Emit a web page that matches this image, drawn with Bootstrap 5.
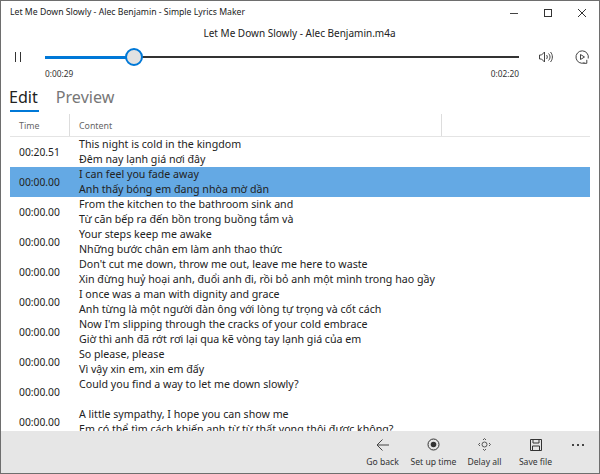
<!DOCTYPE html>
<html lang="en">
<head>
  <meta charset="UTF-8" />
  <title>Let Me Down Slowly - Alec Benjamin - Simple Lyrics Maker</title>
  <link href="https://cdn.jsdelivr.net/npm/bootstrap@5.3.3/dist/css/bootstrap.min.css" rel="stylesheet">
  <style>
    html, body { height: 100%; overflow: hidden; }
    body { font-family: "Noto Sans", "Open Sans", sans-serif; color: #222; background: #fff; }
    .app-window { height: 474px; border: 1px solid #6e6e6e; }
    .title-bar { height: 24px; padding-left: 9px; font-size: 8.7px; color: #222; }
    .win-btn { width: 34px; height: 24px; }
    .file-name { height: 17px; font-size: 10px; line-height: 17px; padding-right: 1px; }
    .player-row { height: 30px; }
    .pause-btn { width: 44px; padding-left: 14px; }
    .seek { flex: 1; height: 2px; background: #333; position: relative; }
    .seek-done { width: 89px; height: 3px; margin-top: -.5px; background: #0078d7; }
    .seek-thumb { position: absolute; left: 80px; top: -8px; width: 18px; height: 18px; border-radius: 50%; background: #e2e2e2; border: 2px solid #0078d7; }
    .player-end { width: 80px; padding-left: 20px; gap: 22px; }
    .time-row { height: 14px; margin-top: -5px; padding: 0 80px 0 44px; font-size: 8.3px; line-height: 14px; color: #333; }
    .pivot { height: 33px; padding: 1px 0 0 8px; gap: 18px; font-size: 16.1px; line-height: 30px; }
    .pivot-on { position: relative; height: 30px; color: #222; }
    .pivot-on::after { content: ""; position: absolute; left: 1px; right: -1px; bottom: 0; height: 2px; background: #0078d7; }
    .pivot-off { color: #777; }
    .lyric-head { height: 23px; margin: 0 9px; font-size: 8.8px; color: #666; border-bottom: 1px solid #e4e4e4; }
    .head-time { width: 60px; padding: 6px 0 0 9px; border-right: 1px solid #ddd; }
    .head-text { width: 372px; padding: 6px 0 0 9px; border-right: 1px solid #ddd; }
    .lyric-list { flex: 1; min-height: 0; overflow: hidden; }
    .lyric-row { height: 30px; margin: 0 9px; flex-shrink: 0; }
    .lyric-row.picked { background: #64a9e4; }
    .lyric-time { width: 60px; padding-left: 9px; font-size: 10.3px; line-height: 30px; }
    .lyric-text { padding-left: 9px; font-size: 10.65px; line-height: 15px; white-space: nowrap; }
    .cmd-bar { height: 42px; background: #e6e6e6; padding-right: 5px; font-size: 8.6px; color: #333; }
    .cmd-btn { width: 51px; padding-top: 2px; }
    .cmd-ico { height: 23px; }
    .cmd-more { width: 33px; height: 27px; gap: 3px; }
    .cmd-dot { width: 2px; height: 2px; background: #444; }
  </style>
</head>
<body>
  <div class="app-window d-flex flex-column">
    <div class="title-bar d-flex align-items-center justify-content-between">
      <span>Let Me Down Slowly - Alec Benjamin - Simple Lyrics Maker</span>
      <div class="d-flex">
        <div class="win-btn d-flex align-items-center justify-content-center"><svg width="10" height="10" viewBox="0 0 10 10"><path d="M1 5.5h8" stroke="#444" fill="none"/></svg></div>
        <div class="win-btn d-flex align-items-center justify-content-center"><svg width="10" height="10" viewBox="0 0 10 10"><rect x="1.5" y="1.5" width="7" height="7" stroke="#333" fill="none"/></svg></div>
        <div class="win-btn d-flex align-items-center justify-content-center"><svg width="10" height="10" viewBox="0 0 10 10"><path d="M1 1l8 8M9 1l-8 8" stroke="#333" fill="none"/></svg></div>
      </div>
    </div>
    <div class="file-name text-center">Let Me Down Slowly - Alec Benjamin.m4a</div>
    <div class="player-row d-flex align-items-center">
      <div class="pause-btn d-flex"><svg width="6" height="10" viewBox="0 0 6 10"><path d="M.5 0v10M5.500 0v10" stroke="#333" fill="none"/></svg></div>
      <div class="seek">
        <div class="seek-done"></div>
        <div class="seek-thumb"></div>
      </div>
      <div class="player-end d-flex align-items-center">
        <svg width="14" height="14" viewBox="0 0 14 14" fill="none" stroke="#444"><path d="M.5 5h2l3-3v10l-3-3h-2zM7.500 5c1 1 1 3 0 4M9.500 3.500c2 2 2 5 0 7M11.500 2c2.500 3 2.500 7 0 10"/></svg>
        <svg width="14" height="14" viewBox="0 0 14 14" fill="none" stroke="#444"><path d="M9.500 12.800A6.200 6.200 0 1 1 13.200 8.500"/><path d="M5.500 4.500l4 2.500-4 2.500z"/><path d="M11.800 9.800v3.500h-3.500"/></svg>
      </div>
    </div>
    <div class="time-row d-flex justify-content-between"><span>0:00:29</span><span>0:02:20</span></div>
    <div class="pivot d-flex">
      <span class="pivot-on">Edit</span>
      <span class="pivot-off">Preview</span>
    </div>
    <div class="lyric-head d-flex">
      <div class="head-time">Time</div>
      <div class="head-text">Content</div>
    </div>
    <div class="lyric-list d-flex flex-column" id="lyricList"></div>
    <div class="cmd-bar d-flex justify-content-end">
      <div class="cmd-btn text-center">
        <div class="cmd-ico d-flex align-items-center justify-content-center"><svg width="14" height="12" viewBox="0 0 14 12" fill="none" stroke="#444"><path d="M13 6H1M6.500.500L1 6l5.500 5.500"/></svg></div>
        Go back
      </div>
      <div class="cmd-btn text-center">
        <div class="cmd-ico d-flex align-items-center justify-content-center"><svg width="13" height="13" viewBox="0 0 13 13"><circle cx="6.500" cy="6.500" r="5.500" fill="none" stroke="#333"/><circle cx="6.500" cy="6.500" r="2.800" fill="#333"/></svg></div>
        Set up time
      </div>
      <div class="cmd-btn text-center">
        <div class="cmd-ico d-flex align-items-center justify-content-center"><svg width="13" height="13" viewBox="0 0 13 13" fill="none" stroke="#555"><circle cx="6.500" cy="6.500" r="2.500"/><path d="M5 2l1.500-1.500L8 2M5 11l1.500 1.500L8 11M2 5L.5 6.500 2 8M11 5l1.500 1.500L11 8"/></svg></div>
        Delay all
      </div>
      <div class="cmd-btn text-center">
        <div class="cmd-ico d-flex align-items-center justify-content-center"><svg width="12" height="12" viewBox="0 0 12 12" fill="none" stroke="#333"><path d="M.5.500h11v11H.5z"/><path d="M3 .500v3.500h6V.500M2.500 11.500V7h7v4.500"/></svg></div>
        Save file
      </div>
      <div class="cmd-more d-flex align-items-center justify-content-center">
        <span class="cmd-dot"></span><span class="cmd-dot"></span><span class="cmd-dot"></span>
      </div>
    </div>
  </div>

  <script>
    const lines = [
      ["00:20.51", "This night is cold in the kingdom", "Đêm nay lạnh giá nơi đây"],
      ["00:00.00", "I can feel you fade away", "Anh thấy bóng em đang nhòa mờ dần"],
      ["00:00.00", "From the kitchen to the bathroom sink and", "Từ căn bếp ra đến bồn trong buồng tắm và"],
      ["00:00.00", "Your steps keep me awake", "Những bước chân em làm anh thao thức"],
      ["00:00.00", "Don't cut me down, throw me out, leave me here to waste", "Xin đừng huỷ hoại anh, đuổi anh đi, rồi bỏ anh một mình trong hao gầy"],
      ["00:00.00", "I once was a man with dignity and grace", "Anh từng là một người đàn ông với lòng tự trọng và cốt cách"],
      ["00:00.00", "Now I'm slipping through the cracks of your cold embrace", "Giờ thì anh đã rớt rơi lại qua kẽ vòng tay lạnh giá của em"],
      ["00:00.00", "So please, please", "Vì vậy xin em, xin em đấy"],
      ["00:00.00", "Could you find a way to let me down slowly?", ""],
      ["00:00.00", "A little sympathy, I hope you can show me", "Em có thể tìm cách khiến anh từ từ thất vọng thôi được không?"]
    ];

    const list = document.getElementById("lyricList");
    lines.forEach((line, i) => {
      const row = document.createElement("div");
      row.className = "lyric-row d-flex" + (i === 1 ? " picked" : "");
      row.innerHTML = `
        <div class="lyric-time">${line[0]}</div>
        <div class="lyric-text">${line[1]}<br>${line[2]}</div>`;
      list.appendChild(row);
    });
  </script>
  <script src="https://cdn.jsdelivr.net/npm/bootstrap@5.3.3/dist/js/bootstrap.bundle.min.js"></script>
</body>
</html>
